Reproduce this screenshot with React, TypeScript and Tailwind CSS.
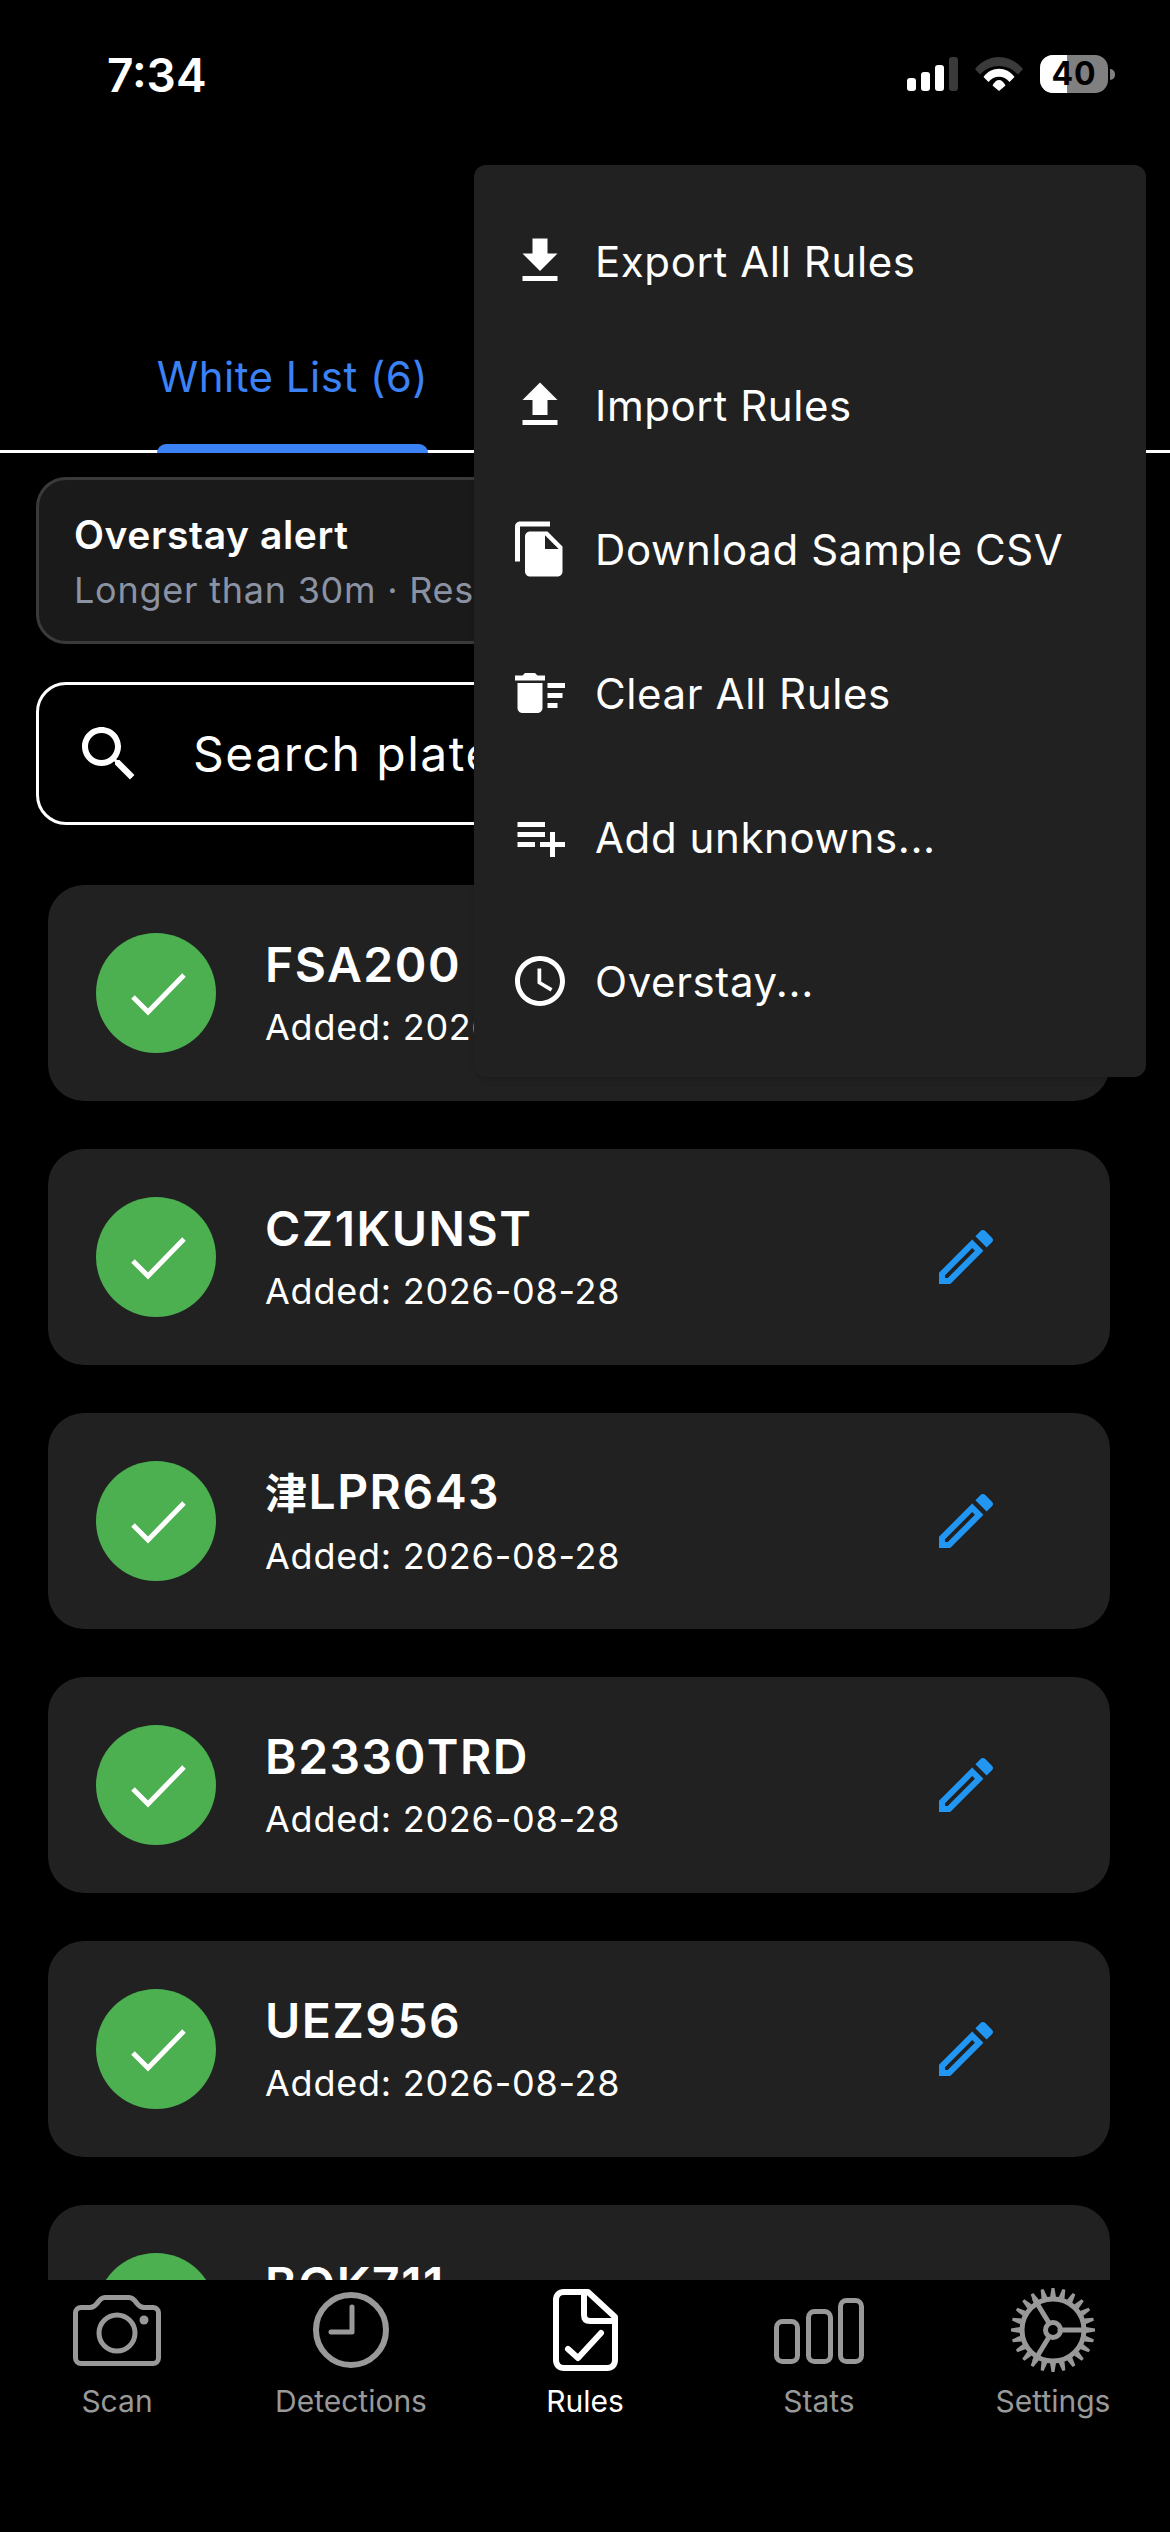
import type { ReactNode } from 'react';

const FONT = "font-['Inter','Noto_Sans_CJK_SC',sans-serif]";

const MenuIcon = ({ d }: { d: string }) => (
  <svg viewBox="0 0 24 24" className="h-[60px] w-[60px] shrink-0" fill="#ffffff">
    <path d={d} />
  </svg>
);

const menuItems = [
  { label: 'Export All Rules', d: 'M19 9h-4V3H9v6H5l7 7 7-7zM5 18v2h14v-2H5z' },
  { label: 'Import Rules', d: 'M9 16h6v-6h4l-7-7-7 7h4zm-4 2h14v2H5z' },
  {
    label: 'Download Sample CSV',
    d: 'M16 1H4c-1.1 0-2 .9-2 2v14h2V3h12V1zm-1 4l6 6v10c0 1.1-.9 2-2 2H7.99C6.89 23 6 22.1 6 21l.01-14c0-1.1.89-2 1.99-2h7zm-1 7h5.5L14 6.5V12z',
  },
  {
    label: 'Clear All Rules',
    d: 'M15 16h4v2h-4zm0-8h7v2h-7zm0 4h6v2h-6zM3 18c0 1.1.9 2 2 2h6c1.1 0 2-.9 2-2V8H3v10zM14 5h-3l-1-1H6L5 5H2v2h12z',
  },
  { label: 'Add unknowns...', d: 'M14 10H3v2h11v-2zm0-4H3v2h11V6zm4 8v-4h-2v4h-4v2h4v4h2v-4h4v-2h-4zM3 16h7v-2H3v2z' },
  {
    label: 'Overstay...',
    d: 'M11.99 2C6.47 2 2 6.48 2 12s4.47 10 9.99 10C17.52 22 22 17.52 22 12S17.52 2 11.99 2zM12 20c-4.42 0-8-3.58-8-8s3.58-8 8-8 8 3.58 8 8-3.58 8-8 8zM12.5 7H11v6l5.25 3.15.75-1.23-4.5-2.67z',
  },
];

const plates = [
  { prefix: '', code: 'FSA200' },
  { prefix: '', code: 'CZ1KUNST' },
  { prefix: '津', code: 'LPR643' },
  { prefix: '', code: 'B2330TRD' },
  { prefix: '', code: 'UEZ956' },
  { prefix: '', code: 'BQK711' },
];

const StatusBar = () => (
  <div className="flex h-[146px] shrink-0 items-start justify-between pl-[107px] pr-[55px] pt-[50px]">
    <span className="text-[46px] font-semibold leading-[50px] text-white">7:34</span>
    <div className="flex items-start pt-[5px]">
      <div className="mt-[2px] flex h-[34px] items-end gap-[5px]">
        <div className="h-[13px] w-[9px] rounded-[3px] bg-white" />
        <div className="h-[19px] w-[9px] rounded-[3px] bg-white" />
        <div className="h-[26px] w-[9px] rounded-[3px] bg-white" />
        <div className="h-[34px] w-[9px] rounded-[3px] bg-[#3a3a3a]" />
      </div>
      <svg viewBox="0 0 48 34" className="ml-[17px] mt-[2px] h-[34px] w-[48px]">
        <path d="M0 12C13-4 35-4 48 12l-5 5.500C32 6.200 16 6.200 5 17.500z" fill="#3a3a3a" />
        <path d="M8.500 20C16 9 32 9 39.500 20l-5 5C29 18 19 18 13.500 25z" fill="#ffffff" />
        <path d="M17.500 28.500C21 21 27 21 30.500 28.500L24 34z" fill="#ffffff" />
      </svg>
      <div className="ml-[17px] flex items-center">
        <div className="relative h-[38px] w-[68px] rounded-[13px] bg-[#808080]">
          <div className="h-full w-[27px] rounded-l-[13px] bg-white" />
          <span className="absolute inset-0 flex items-center justify-center text-[32px] font-bold leading-none tracking-[1px] text-black">
            40
          </span>
        </div>
        <div className="ml-[2px] h-[11px] w-[5px] rounded-r-full bg-[#808080]" />
      </div>
    </div>
  </div>
);

const Tabs = () => (
  <div className="flex h-[307px] shrink-0 border-b-[3px] border-white">
    <div className="relative ml-[157px] flex h-[307px] w-[271px] items-start justify-center pt-[206px]">
      <span className="whitespace-nowrap text-[42px] leading-[50px] tracking-[0.5px] text-[#3b82f6]">White List (6)</span>
      <div className="absolute inset-x-0 bottom-0 h-[9px] rounded-t-[9px] bg-[#3b82f6]" />
    </div>
  </div>
);

const OverstayCard = () => (
  <div className="mx-[36px] mt-[24px] h-[167px] shrink-0 overflow-hidden rounded-[30px] border-[3px] border-[#3a3a3a] bg-[#1a1a1a] pl-[35px] pt-[30px]">
    <div className="text-[39px] font-semibold leading-[50px] tracking-[0.6px] text-white">Overstay alert</div>
    <div className="mt-[5px] whitespace-nowrap text-[36px] leading-[50px] tracking-[0.75px] text-[#8b92a3]">
      Longer than 30m · Resident
    </div>
  </div>
);

const SearchBox = () => (
  <div className="mx-[36px] mt-[38px] flex h-[143px] shrink-0 items-center rounded-[30px] border-[3px] border-white pl-[34px]">
    <svg viewBox="0 0 24 24" className="h-[72px] w-[72px] shrink-0" fill="#ffffff">
      <path d="M15.500 14h-.79l-.28-.27C15.410 12.590 16 11.110 16 9.500 16 5.910 13.090 3 9.500 3S3 5.910 3 9.500 5.910 16 9.500 16c1.610 0 3.090-.59 4.230-1.570l.27.28v.79l5 4.990L20.490 19l-4.990-5zm-6 0C7.010 14 5 11.990 5 9.500S7.010 5 9.500 5 14 7.010 14 9.500 11.990 14 9.500 14z" />
    </svg>
    <span className="ml-[48px] text-[48px] tracking-[1.5px] text-white">Search plates</span>
  </div>
);

const PlateRow = ({ prefix, code }: { prefix: string; code: string }) => (
  <div className="flex h-[216px] shrink-0 items-center rounded-[36px] bg-[#212121] pl-[48px] pr-[108px]">
    <div className="flex h-[120px] w-[120px] shrink-0 items-center justify-center rounded-full bg-[#4caf50]">
      <svg viewBox="0 0 120 120" className="h-[120px] w-[120px]" fill="none" stroke="#ffffff" strokeWidth="5">
        <path d="M37 64l15 15 36-37" />
      </svg>
    </div>
    <div className="ml-[49px] flex-1">
      <div className="-mt-[1px] text-[48px] font-semibold leading-[60px] tracking-[1.5px] text-white">
        {prefix && <span className="text-[42px]">{prefix}</span>}
        {code}
      </div>
      <div className="mt-[8px] text-[36px] leading-[48px] tracking-[0.75px] text-white">Added: 2026-08-28</div>
    </div>
    <svg viewBox="0 0 24 24" className="h-[72px] w-[72px] shrink-0" fill="#2196f3">
      <path d="M14.060 9.020l.92.92L5.920 19H5v-.92l9.060-9.060M17.660 3c-.25 0-.51.1-.7.29l-1.830 1.830 3.750 3.750 1.830-1.830c.39-.39.39-1.020 0-1.410l-2.340-2.340c-.2-.2-.45-.29-.71-.29zm-3.600 3.190L3 17.250V21h3.750L17.810 9.940l-3.750-3.750z" />
    </svg>
  </div>
);

const NavItem = ({ label, active, children }: { label: string; active?: boolean; children: ReactNode }) => (
  <div className={`flex flex-col items-center pt-[2px] ${active ? 'text-white' : 'text-[#999999]'}`}>
    <svg
      viewBox="0 0 96 96"
      className="h-[96px] w-[96px]"
      fill="none"
      stroke="currentColor"
      strokeWidth="5"
      strokeLinecap="round"
      strokeLinejoin="round"
    >
      {children}
    </svg>
    <span className="mt-[3px] text-[30px] leading-[40px]">{label}</span>
  </div>
);

const gearTeeth = Array.from({ length: 24 }, (_, i) => i * 15);

const BottomNav = () => (
  <div className="grid h-[252px] shrink-0 grid-cols-5 bg-black">
    <NavItem label="Scan">
      <path d="M6.500 31c0-3 2.500-5.500 5.500-5.500h9c3 0 5-1.500 7-4 2-3 4-6 8-6h24c4 0 6 3 8 6 2 2.500 4 4 7 4h9c3 0 5.500 2.500 5.500 5.500v45c0 3-2.500 5.500-5.500 5.500H12c-3 0-5.500-2.500-5.500-5.500z" />
      <circle cx="48" cy="51" r="18" />
      <circle cx="75" cy="38" r="4.500" fill="currentColor" stroke="none" />
    </NavItem>
    <NavItem label="Detections">
      <circle cx="48" cy="48" r="35" strokeWidth="6" />
      <path d="M49 25v25H28" />
    </NavItem>
    <NavItem label="Rules" active>
      <path d="M27 10h24l27 25v43c0 5-3 8-8 8H27c-5 0-8-3-8-8V18c0-5 3-8 8-8z" strokeWidth="6" />
      <path d="M47 11v22c0 4 2 6 6 6h25" strokeWidth="6" />
      <path d="M31 67l10 9 23-25" strokeWidth="6" />
    </NavItem>
    <NavItem label="Stats">
      <rect x="5.500" y="39.500" width="21" height="40" rx="6" />
      <rect x="37.500" y="29.500" width="22" height="50" rx="6" />
      <rect x="69.500" y="18.500" width="21" height="61" rx="6" />
    </NavItem>
    <NavItem label="Settings">
      <circle cx="48" cy="48" r="31" />
      <circle cx="48" cy="48" r="7.500" />
      <path d="M55 48h24M44 41L30 18M44 55L30 78" />
      {gearTeeth.map((a) => (
        <path key={a} d="M45 15L46.500 6h3L51 15z" fill="currentColor" stroke="none" transform={`rotate(${a} 48 48)`} />
      ))}
    </NavItem>
  </div>
);

const ActionsMenu = () => (
  <div className="absolute left-[474px] top-[165px] w-[672px] rounded-[12px] bg-[#212121] py-[24px] shadow-md">
    {menuItems.map((item) => (
      <div key={item.label} className="flex h-[144px] items-center gap-[25px] pl-[36px]">
        <MenuIcon d={item.d} />
        <span className="text-[42px] tracking-[0.6px] text-white">{item.label}</span>
      </div>
    ))}
  </div>
);

export default function App() {
  return (
    <div className={`relative flex h-[2532px] w-[1170px] flex-col overflow-hidden bg-black ${FONT}`}>
      <StatusBar />
      <Tabs />
      <div className="flex min-h-0 flex-1 flex-col overflow-hidden">
        <OverstayCard />
        <SearchBox />
        <div className="ml-[48px] mr-[60px] mt-[60px] flex flex-col gap-[48px]">
          {plates.map((plate) => (
            <PlateRow key={plate.code} prefix={plate.prefix} code={plate.code} />
          ))}
        </div>
      </div>
      <BottomNav />
      <ActionsMenu />
    </div>
  );
}
